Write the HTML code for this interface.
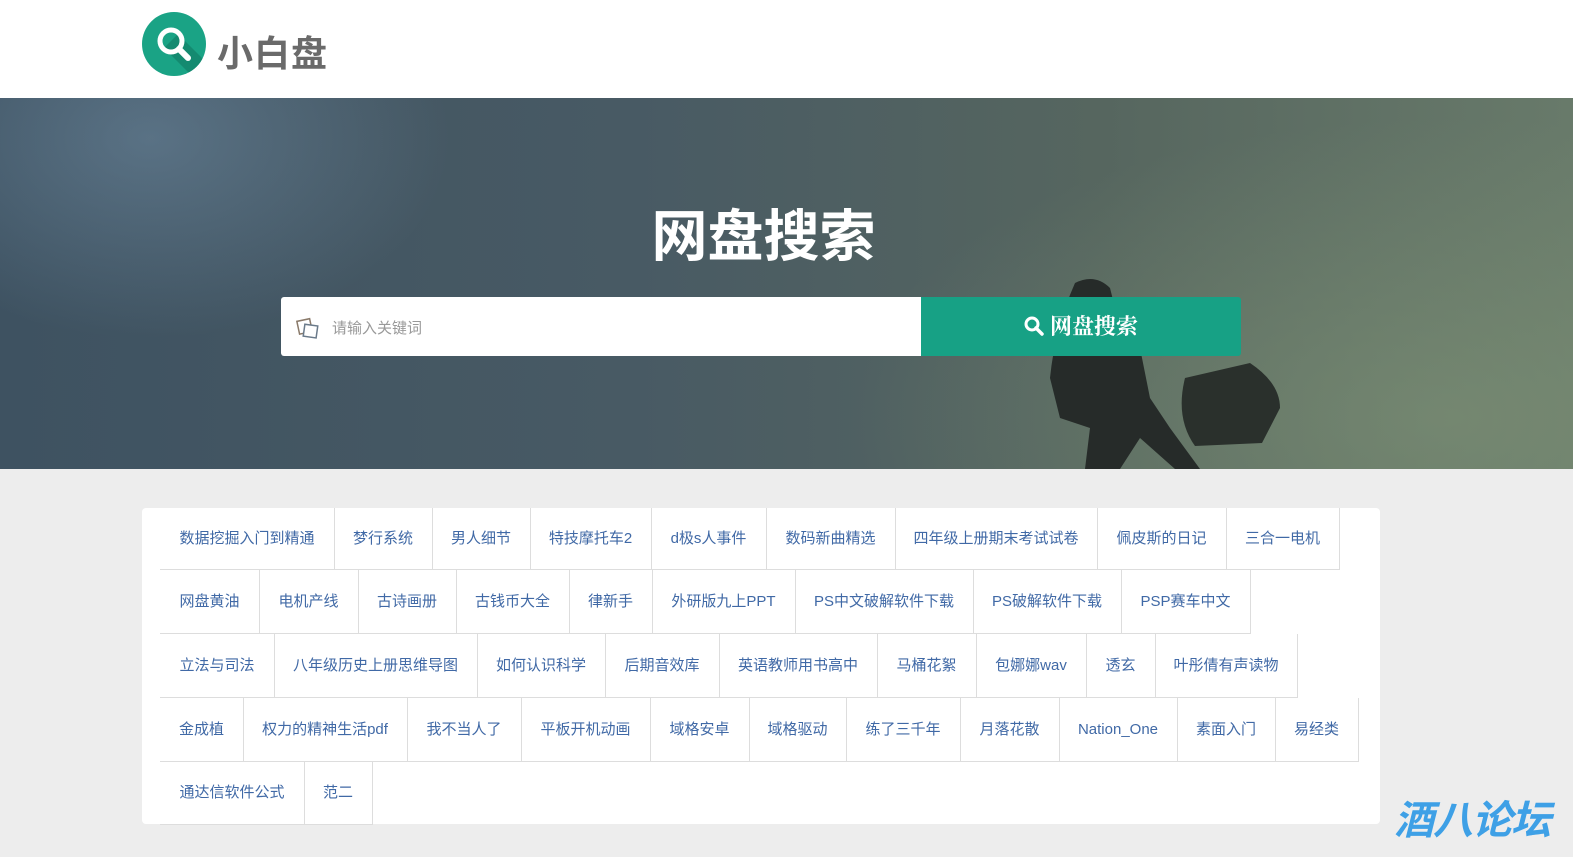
<!DOCTYPE html>
<html><head><meta charset="utf-8"><style>
*{margin:0;padding:0;box-sizing:border-box}
body{width:1573px;height:857px;background:#ededed;font-family:"Liberation Sans","Noto Sans CJK SC",sans-serif;position:relative;overflow:hidden}
.hdr{position:absolute;left:0;top:0;width:1573px;height:98px;background:#fff}
.logo{position:absolute;left:142px;top:12px;width:64px;height:64px;border-radius:50%;background:#1aa385;overflow:hidden}
.brand{position:absolute;left:217px;top:25px;font-size:36px;font-weight:bold;color:#6a6a6a;letter-spacing:1px}
.hero{position:absolute;left:0;top:98px;width:1573px;height:371px;background:
radial-gradient(ellipse 300px 200px at 150px 40px,rgba(120,150,175,.45),transparent),
radial-gradient(ellipse 600px 300px at 1450px 320px,rgba(130,150,120,.55),transparent),
linear-gradient(90deg,#3e5261 0%,#485a64 40%,#56665f 70%,#687a6a 100%)}
.title{position:absolute;left:0;width:1573px;top:94px;text-align:center;color:#fff;font-size:56px;font-weight:bold;padding-right:46px}
.inp{position:absolute;left:281px;top:297px;width:640px;height:59px;background:#fff;border-radius:3px 0 0 3px}
.inp span{position:absolute;left:51px;top:20px;font-size:15px;color:#999}
.btn{position:absolute;left:921px;top:297px;width:320px;height:59px;background:#17a185;border-radius:0 3px 3px 0;color:#fff;font-size:22px;font-family:"Liberation Serif","Noto Serif CJK SC",serif;font-weight:bold;text-align:center;line-height:59px}
.card{position:absolute;left:142px;top:508px;width:1238px;height:316px;background:#fff;border-radius:4px}
.c{position:absolute;border-right:1px solid #ddd;border-bottom:1px solid #ddd;color:#4069a6;font-size:15px;text-align:center;white-space:nowrap}
.wm{position:absolute;left:1394px;top:788px;font-size:40px;font-weight:bold;font-style:italic;color:#3ea0e6;letter-spacing:-1px}
</style></head><body>
<div class="hdr"></div>
<div class="logo"><svg width="64" height="64"><polygon points="22,36 36,22 70,56 56,70" fill="#148a70"/><circle cx="29" cy="29" r="11" fill="none" stroke="#fff" stroke-width="5"/><line x1="37" y1="37" x2="46" y2="46" stroke="#fff" stroke-width="6" stroke-linecap="round"/></svg></div>
<div class="brand">小白盘</div>
<div class="hero">
<svg width="1573" height="371" style="position:absolute;left:0;top:0">
<path d="M1075 185 Q1095 175 1110 190 L1115 210 L1140 250 L1150 300 L1170 330 L1200 371 L1175 371 L1140 340 L1120 371 L1085 371 L1090 330 L1060 320 L1050 280 Q1055 230 1075 185Z" fill="#262b29"/>
<path d="M1185 280 L1250 265 Q1280 285 1280 310 L1262 345 L1195 348 Q1175 320 1185 280Z" fill="#2a302c"/>
</svg>
<div class="title">网盘搜索</div>
</div>
<div class="inp"><svg style="position:absolute;left:15px;top:20px" width="24" height="22"><rect x="2" y="3" width="13" height="13" fill="none" stroke="#8a7a6a" stroke-width="1.5" transform="rotate(-12 8 9)"/><rect x="8" y="8" width="13" height="12" fill="#fff" stroke="#6a7a8a" stroke-width="1.5" transform="rotate(8 14 14)"/></svg><span>请输入关键词</span></div>
<div class="btn"><svg width="20" height="20" style="vertical-align:-2px;margin-right:6px"><circle cx="8" cy="8" r="6" fill="none" stroke="#fff" stroke-width="3"/><line x1="12" y1="12" x2="18" y2="18" stroke="#fff" stroke-width="3.5" stroke-linecap="round"/></svg>网盘搜索</div>
<div class="card"></div>
<div id="tags"></div>
<div class="wm">酒八论坛</div>
<script>
var rows=[
[508,569,[160,334,432,530,651,766,895,1097,1226,1339],["数据挖掘入门到精通","梦行系统","男人细节","特技摩托车2","d极s人事件","数码新曲精选","四年级上册期末考试试卷","佩皮斯的日记","三合一电机"]],
[570,633,[160,259,358,456,569,652,795,973,1121,1250],["网盘黄油","电机产线","古诗画册","古钱币大全","律新手","外研版九上PPT","PS中文破解软件下载","PS破解软件下载","PSP赛车中文"]],
[634,697,[160,274,477,605,719,877,976,1086,1155,1297],["立法与司法","八年级历史上册思维导图","如何认识科学","后期音效库","英语教师用书高中","马桶花絮","包娜娜wav","透玄","叶彤倩有声读物"]],
[698,761,[160,243,407,521,650,749,846,960,1059,1177,1275,1358],["金成植","权力的精神生活pdf","我不当人了","平板开机动画","域格安卓","域格驱动","练了三千年","月落花散","Nation_One","素面入门","易经类"]],
[762,824,[160,304,372],["通达信软件公式","范二"]]];
var h="";rows.forEach(function(r){var t=r[0],b=r[1],x=r[2];for(var i=0;i<r[3].length;i++){h+='<div class="c" style="left:'+x[i]+'px;top:'+t+'px;width:'+(x[i+1]-x[i]+1)+'px;height:'+(b-t+1)+'px;line-height:'+(b-t)+'px">'+r[3][i]+'</div>';}});
document.getElementById("tags").innerHTML=h;
</script>
</body></html>
